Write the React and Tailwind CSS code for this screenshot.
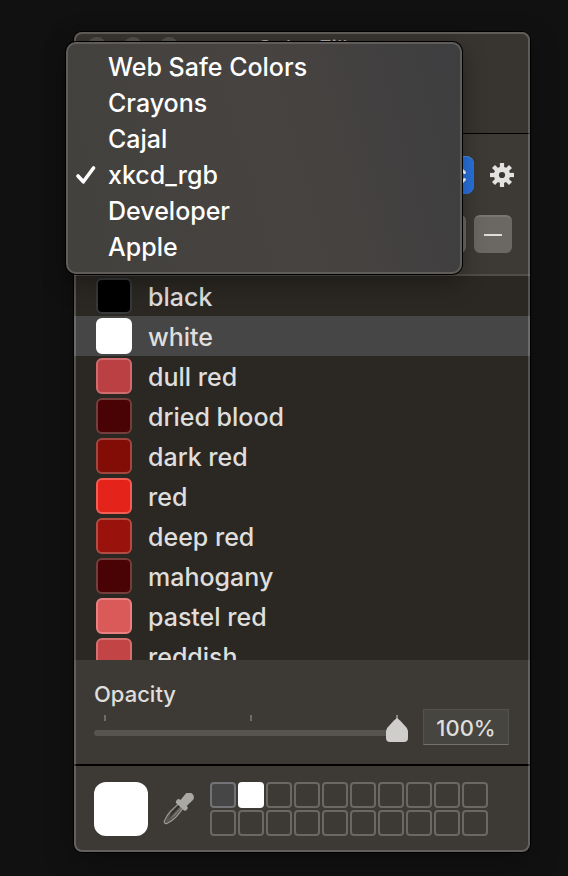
import { useState } from "react";

const PALETTES = ["Web Safe Colors", "Crayons", "Cajal", "xkcd_rgb", "Developer", "Apple"];

const COLORS = [
  { name: "black", fill: "bg-black", edge: "border-[#37383a]" },
  { name: "white", fill: "bg-white", edge: "border-white" },
  { name: "dull red", fill: "bg-[#ba4043]", edge: "border-[#d06c6e]" },
  { name: "dried blood", fill: "bg-[#490304]", edge: "border-[#743e3c]" },
  { name: "dark red", fill: "bg-[#820d07]", edge: "border-[#a14740]" },
  { name: "red", fill: "bg-[#e4241a]", edge: "border-[#f45d53]" },
  { name: "deep red", fill: "bg-[#99130c]", edge: "border-[#b54c44]" },
  { name: "mahogany", fill: "bg-[#490304]", edge: "border-[#743e3c]" },
  { name: "pastel red", fill: "bg-[#da5a59]", edge: "border-[#ea8180]" },
  { name: "reddish", fill: "bg-[#c24445]", edge: "border-[#d66f70]" },
];

const SAVED = ["gray", "white", ...Array(18).fill("empty")];
const SAVED_STYLE = {
  gray: "border-[#717376] bg-[#464646]",
  white: "border-white bg-white",
  empty: "border-[#6b6863]",
};

function Gear() {
  return (
    <svg viewBox="-12 -12 24 24" className="size-6" aria-hidden="true">
      <g fill="#e3e2e0">
        {[0, 45, 90, 135].map((a) => (
          <path key={a} d="M-2.1 -12h4.2v24h-4.2z" transform={`rotate(${a})`} />
        ))}
        <circle r="8.2" />
      </g>
      <circle r="3.1" fill="#3b3833" />
    </svg>
  );
}

function Eyedropper() {
  return (
    <svg viewBox="0 0 32 32" className="size-8" aria-hidden="true">
      <g transform="translate(1.6 30.4) rotate(43)">
        <path
          d="M-3.2 -24.5L-4 -13C-4 -8.5 -2.9 -4.5 -1.8 -1.4Q0 .8 1.8 -1.4C2.9 -4.5 4 -8.5 4 -13L3.2 -24.5z"
          fill="#57544f"
          stroke="#a09e9a"
          strokeWidth="1.1"
        />
        <path d="M-.4 -24V-6L-2.4 -13V-24z" fill="#312e2a" />
        <path d="M.8 -24V-6L2.2 -13V-24z" fill="#7b7873" />
        <rect x="-7" y="-28" width="14" height="5.4" rx="2.6" fill="#aaa8a4" />
        <path d="M-4.2 -26L-4.8 -36C-4.8 -42 4.8 -42 4.8 -36L4.2 -26z" fill="#aaa8a4" />
      </g>
    </svg>
  );
}

function PaletteMenu({ value, onPick }) {
  return (
    <ul
      role="listbox"
      aria-label="Palettes"
      className="absolute -top-[114px] -left-7 z-10 w-[396px] rounded-[10px] border-2 border-[#5f5c5a] bg-linear-75 from-[#42413e] via-[#474340] via-55% to-[#3e3e40] py-[5px] pb-[7px] shadow-[0_0_0_1px_#000,0_8px_24px_rgba(0,0,0,0.35)]"
    >
      {PALETTES.map((p) => (
        <li key={p} role="option" aria-selected={p === value}>
          <button
            type="button"
            onClick={() => onPick(p)}
            className="flex h-9 w-full items-center text-left text-[25px] leading-9 font-medium text-white"
          >
            <span className="flex w-10 pl-2">
              {p === value && (
                <svg viewBox="0 0 20 20" className="size-5" aria-hidden="true">
                  <path
                    d="M2 11L7.3 16.8L17.5 3"
                    fill="none"
                    stroke="#fff"
                    strokeWidth="3.6"
                    strokeLinecap="round"
                    strokeLinejoin="round"
                  />
                </svg>
              )}
            </span>
            {p}
          </button>
        </li>
      ))}
    </ul>
  );
}

export default function App() {
  const [palette, setPalette] = useState("xkcd_rgb");
  const [selected, setSelected] = useState("white");
  const [opacity, setOpacity] = useState(100);

  return (
    <main className="min-h-screen bg-[#111111] pt-8 pr-[38px] pb-6 pl-[74px] font-['Inter','Liberation_Sans',sans-serif]">
      <section
        aria-label="Color Fill"
        className="relative rounded-lg bg-[#3d3a35] shadow-[0_0_0_1px_#000,0_10px_30px_rgba(0,0,0,0.3)] after:pointer-events-none after:absolute after:inset-0 after:rounded-lg after:border-2 after:border-white/20"
      >
        <header className="h-[102px] rounded-t-lg border-b border-black bg-[#38342f] px-[13px] pt-[5px]">
          <div className="relative flex gap-4">
            <span className="size-5 rounded-full bg-[#53504c]" />
            <span className="size-5 rounded-full bg-[#53504c]" />
            <span className="size-5 rounded-full bg-[#53504c]" />
            <h1 className="absolute inset-x-0 top-0 text-center text-[22px] leading-[22px] text-[#aaa8a4]">
              Color Fill
            </h1>
          </div>
        </header>

        <div className="border-b-2 border-[#504d48] px-5 pt-[22px] pb-[21px] pr-[18px]">
          <div className="relative flex items-center justify-between">
            <label className="relative flex h-[38px] w-[380px]">
              <select
                value={palette}
                onChange={(e) => setPalette(e.target.value)}
                aria-label="Palette"
                className="w-full appearance-none rounded-lg bg-[#6b6863] px-4 text-[22px] text-white"
              >
                {PALETTES.map((p) => (
                  <option key={p}>{p}</option>
                ))}
              </select>
              <span className="pointer-events-none absolute inset-y-0 right-0 flex w-[30px] items-center justify-center rounded-r-lg border-t border-[#4b8be8] bg-[#2872df]">
                <svg viewBox="0 0 16 24" className="h-6 w-4" aria-hidden="true">
                  <path
                    d="M2.5 8.5L8 3L13.5 8.5M2.5 15.5L8 21L13.5 15.5"
                    fill="none"
                    stroke="#fff"
                    strokeWidth="3"
                    strokeLinecap="round"
                    strokeLinejoin="round"
                  />
                </svg>
              </span>
            </label>
            <button type="button" aria-label="Options" className="-mr-0.5">
              <Gear />
            </button>
            <PaletteMenu value={palette} onPick={setPalette} />
          </div>
          <div className="mt-[21px] flex justify-end gap-2">
            <button
              type="button"
              aria-label="Add color"
              className="size-[38px] rounded-md border-t-2 border-[#7a7772] bg-[#6b6863]"
            />
            <button
              type="button"
              aria-label="Remove color"
              className="flex size-[38px] items-center justify-center rounded-md border-t-2 border-[#7a7772] bg-[#6b6863]"
            >
              <span className="h-0.5 w-[18px] bg-[#dddcda]" />
            </button>
          </div>
        </div>

        <ul className="h-96 overflow-hidden bg-[#2b2823]">
          {COLORS.map((c) => (
            <li key={c.name}>
              <button
                type="button"
                onClick={() => setSelected(c.name)}
                className={`flex h-10 w-full items-center gap-4 pl-[22px] text-left text-[25px] font-medium text-[#dfdedc] ${
                  c.name === selected ? "bg-[#464646]" : ""
                }`}
              >
                <span className={`size-9 rounded-md border-2 ${c.fill} ${c.edge}`} />
                <span className="pt-px leading-8">{c.name}</span>
              </button>
            </li>
          ))}
        </ul>

        <div className="flex h-[106px] flex-col border-b-2 border-black pr-[21px] pl-5">
          <label htmlFor="opacity" className="mt-5 h-7 text-[22px] leading-7 font-medium text-[#dfdedc]">
            Opacity
          </label>
          <div className="mt-px flex items-start gap-[15px]">
            <div className="mt-1.5 flex-1">
              <div className="flex justify-between px-2.5">
                <span className="h-1.5 w-0.5 bg-[#6f6c68]" />
                <span className="h-1.5 w-0.5 bg-[#6f6c68]" />
                <span className="h-1.5 w-0.5 bg-[#8a8783]" />
              </div>
              <input
                id="opacity"
                type="range"
                min="0"
                max="100"
                value={opacity}
                onChange={(e) => setOpacity(Number(e.target.value))}
                className="relative block h-6 w-full appearance-none bg-transparent [&::-webkit-slider-runnable-track]:h-1.5 [&::-webkit-slider-runnable-track]:rounded-full [&::-webkit-slider-runnable-track]:bg-[#57544f] [&::-webkit-slider-thumb]:-mt-3 [&::-webkit-slider-thumb]:h-6 [&::-webkit-slider-thumb]:w-[22px] [&::-webkit-slider-thumb]:appearance-none [&::-webkit-slider-thumb]:rounded-b-[4px] [&::-webkit-slider-thumb]:bg-[#cfcecc] [&::-webkit-slider-thumb]:[clip-path:polygon(50%_0,64%_10%,95%_42%,100%_54%,100%_100%,0_100%,0_54%,5%_42%,36%_10%)]"
              />
            </div>
            <input
              type="text"
              aria-label="Opacity value"
              value={`${opacity}%`}
              onChange={(e) => setOpacity(Math.min(100, parseInt(e.target.value, 10) || 0))}
              className="h-9 w-[86px] border border-[#54514d] border-b-[#74716d] bg-[#474540] pt-0.5 text-center text-[22px] font-medium text-[#dfdedc]"
            />
          </div>
        </div>

        <footer className="flex items-center py-4 pl-5">
          <button
            type="button"
            aria-label="Current color"
            className="size-[54px] rounded-xl bg-white"
          />
          <button type="button" aria-label="Pick color" className="ml-[15px]">
            <Eyedropper />
          </button>
          <div className="ml-[15px] grid grid-cols-10 gap-0.5">
            {SAVED.map((s, i) => (
              <button
                key={i}
                type="button"
                aria-label={`Saved color ${i + 1}`}
                className={`size-[26px] rounded-sm border-2 ${SAVED_STYLE[s]}`}
              />
            ))}
          </div>
        </footer>
      </section>
    </main>
  );
}
